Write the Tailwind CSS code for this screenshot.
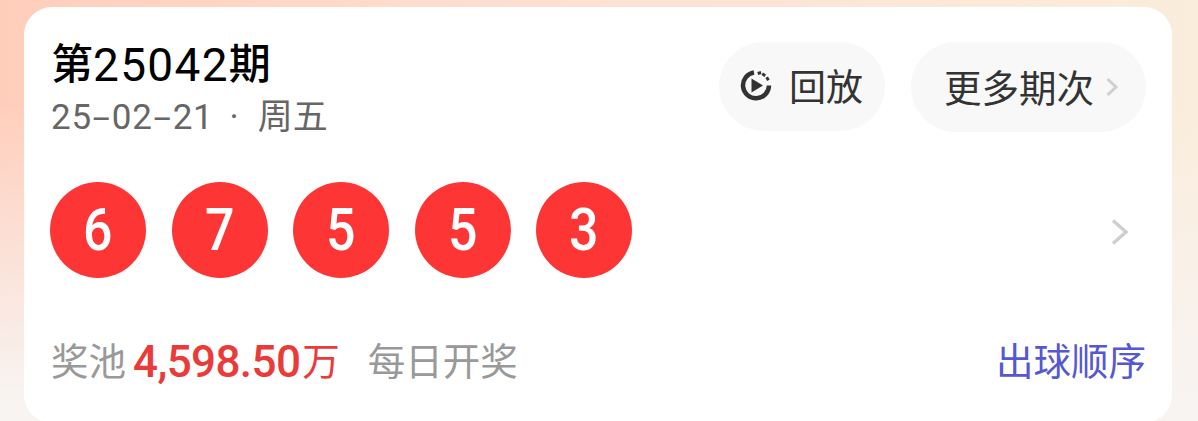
<!DOCTYPE html>
<html lang="zh-CN">
<head>
    <meta charset="UTF-8">
    <title>第25042期</title>
    <script src="https://cdn.jsdelivr.net/npm/@tailwindcss/browser@4"></script>
</head>
<body class="w-[1198px] h-[421px] overflow-hidden bg-[linear-gradient(180deg,#f8f4f200_0%,#f8f4f200_25%,#f8f4f2_95%,#f8f4f2_100%),linear-gradient(90deg,#ffcebb_0%,#fde0d4_45%,#faeddc_100%)] font-['Roboto','Noto_Sans_CJK_SC',sans-serif]">
    <div class="ml-6 mt-[7px] w-[1148px] h-[416px] bg-white rounded-[28px] pl-[27px] pr-[26px] flex flex-col">
        <!-- Header -->
        <div class="flex justify-between items-start">
            <div>
                <h1 class="mt-[35px] h-[46px] flex items-center text-black font-medium text-[42px] leading-[46px] whitespace-nowrap">第<span class="text-[46px] font-normal tracking-[1.300px]">25042</span>期</h1>
                <p class="mt-[10px] h-[40px] flex items-center text-[#666666] text-[35px] leading-[40px] whitespace-nowrap">
                    <span class="tracking-[0.750px]">25<span class="inline-block w-[20px] text-center scale-x-[1.8]">-</span>02<span class="inline-block w-[20px] text-center scale-x-[1.8]">-</span>21</span>
                    <span class="ml-[16px] mr-[19px]">·</span>周五
                </p>
            </div>
            <div class="flex gap-[26px] mt-[35px]">
                <button class="h-[89px] w-[166px] rounded-full bg-[#f8f8f8] flex items-center pl-[20px] text-[#333333] text-[37px] whitespace-nowrap">
                    <svg class="w-[34px] h-[34px] mr-[16px] -mt-[3px] shrink-0" viewBox="0 0 34 34" fill="none">
                        <path d="M15 4.500A13 13 0 1 0 30 17.500" stroke="#333" stroke-width="4.500"/>
                        <path d="M12.500 10.500L24 17.500L12.500 24.500Z" fill="#333"/>
                        <path d="M20 3.500L20.800 6.500M25.500 5.500L24 8M29.800 10L27.300 11.500" stroke="#333" stroke-width="3.500"/>
                    </svg>
                    <span class="mt-[4px]">回放</span>
                </button>
                <button class="h-[90px] w-[235px] rounded-full bg-[#f8f8f8] flex items-center pl-[33px] text-[#333333] text-[37.500px] whitespace-nowrap">
                    <span class="mt-[4px]">更多期次</span>
                    <svg class="w-[14px] h-[22px] ml-[11px] shrink-0" viewBox="0 0 14 22" fill="none">
                        <path d="M2.500 3L11 11L2.500 19" stroke="#cfcfcf" stroke-width="3"/>
                    </svg>
                </button>
            </div>
        </div>
        <!-- Balls -->
        <div class="flex items-center justify-between mt-[44px] pr-[17px]">
            <div class="flex gap-[25.500px] -ml-[1px]">
                <div class="w-[96px] h-[96px] rounded-full bg-[#fd3535] text-white flex items-center justify-center"><span class="font-medium text-[59px] scale-x-[.88]">6</span></div>
                <div class="w-[96px] h-[96px] rounded-full bg-[#fd3535] text-white flex items-center justify-center"><span class="font-medium text-[59px] scale-x-[.88]">7</span></div>
                <div class="w-[96px] h-[96px] rounded-full bg-[#fd3535] text-white flex items-center justify-center"><span class="font-medium text-[59px] scale-x-[.88]">5</span></div>
                <div class="w-[96px] h-[96px] rounded-full bg-[#fd3535] text-white flex items-center justify-center"><span class="font-medium text-[59px] scale-x-[.88]">5</span></div>
                <div class="w-[96px] h-[96px] rounded-full bg-[#fd3535] text-white flex items-center justify-center"><span class="font-medium text-[59px] scale-x-[.88]">3</span></div>
            </div>
            <svg class="w-[18px] h-[28px] mt-[4px]" viewBox="0 0 18 28" fill="none">
                <path d="M2 2.500L15 14L2 25.500" stroke="#cfcfcf" stroke-width="3.500"/>
            </svg>
        </div>
        <!-- Footer -->
        <div class="flex justify-between items-center mt-[60px] text-[37.500px] leading-[48px] whitespace-nowrap">
            <div class="flex items-center text-[#999999]">
                <span>奖池</span>
                <span class="ml-[7px] flex items-center text-[#ea3a3a]"><span class="font-medium text-[44px] tracking-[-0.600px] mr-[2px]">4,598.50</span>万</span>
                <span class="ml-[28px]">每日开奖</span>
            </div>
            <span class="text-[#5558d0]">出球顺序</span>
        </div>
    </div>
</body>
</html>
